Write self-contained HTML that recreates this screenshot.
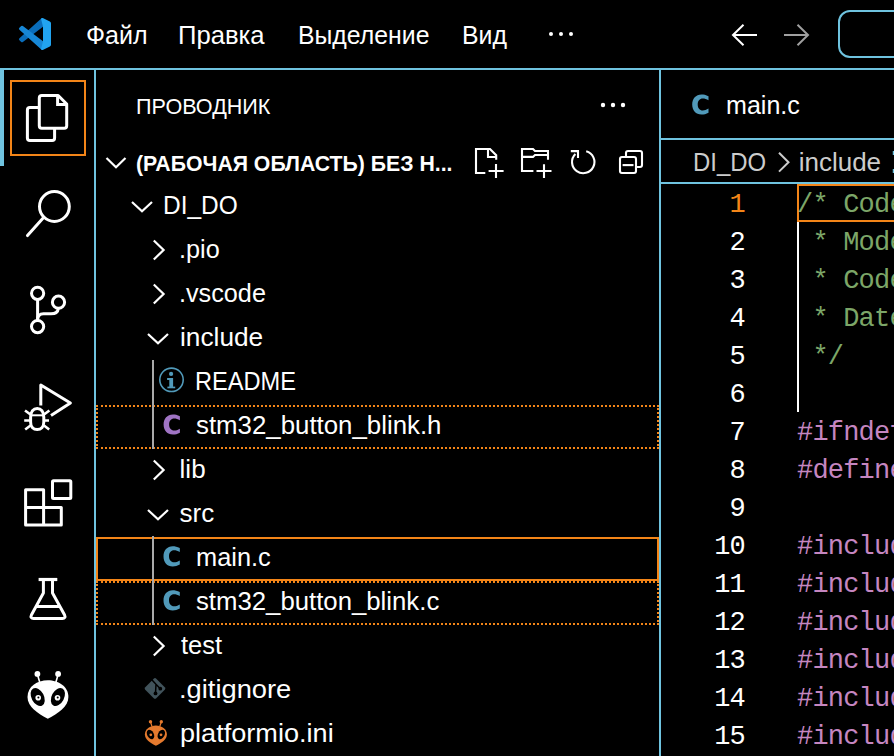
<!DOCTYPE html>
<html><head><meta charset="utf-8">
<style>
*{margin:0;padding:0;box-sizing:border-box}
html,body{width:894px;height:756px;overflow:hidden;background:#000}
body{position:relative;font-family:"Liberation Sans",sans-serif;color:#fff}
.a{position:absolute}
.t{position:absolute;white-space:nowrap;font-size:26px;line-height:30px;transform-origin:0 0}
.hl{position:absolute;background:#6FC3DF}
.mono{font-family:"Liberation Mono",monospace}
svg{position:absolute;overflow:visible}
</style></head><body>

<!-- borders -->
<div class="hl" style="left:0;top:68px;width:894px;height:2px"></div>
<div class="hl" style="left:94px;top:70px;width:2px;height:686px"></div>
<div class="hl" style="left:659px;top:70px;width:2px;height:686px"></div>
<div class="hl" style="left:661px;top:138px;width:233px;height:2px"></div>
<div class="hl" style="left:661px;top:182px;width:233px;height:2px"></div>
<!-- active indicator -->
<div class="a" style="left:0;top:70px;width:4px;height:96px;background:#6FC3DF"></div>
<div class="a" style="left:10px;top:80px;width:76px;height:76px;border:2px solid #F38518"></div>

<!-- title bar -->
<div class="t" id="m1" style="left:85.5px;top:20px;transform:scaleX(0.963)">Файл</div>
<div class="t" id="m2" style="left:178.2px;top:20px;transform:scaleX(0.986)">Правка</div>
<div class="t" id="m3" style="left:297.7px;top:20px;transform:scaleX(0.954)">Выделение</div>
<div class="t" id="m4" style="left:462.3px;top:20px;transform:scaleX(0.956)">Вид</div>
<div class="a" style="left:549px;top:32px;width:4px;height:4px;border-radius:50%;background:#fff"></div>
<div class="a" style="left:559px;top:32px;width:4px;height:4px;border-radius:50%;background:#fff"></div>
<div class="a" style="left:569px;top:32px;width:4px;height:4px;border-radius:50%;background:#fff"></div>
<div class="a" style="left:838px;top:10px;width:80px;height:48px;border:2px solid #6FC3DF;border-radius:12px"></div>

<!-- sidebar -->
<div class="t" id="h1" style="left:135.7px;top:92px;font-size:22px;transform:scaleX(0.98)">ПРОВОДНИК</div>
<div class="t" id="h2" style="left:136.2px;top:149px;font-size:22px;font-weight:bold;transform:scaleX(0.965)">(РАБОЧАЯ ОБЛАСТЬ) БЕЗ Н...</div>

<div class="t" id="r0" style="left:162.9px;top:190px;transform:scaleX(0.94)">DI_DO</div>
<div class="t" id="r1" style="left:178.6px;top:234px;transform:scaleX(0.97)">.pio</div>
<div class="t" id="r2" style="left:178.6px;top:278px;transform:scaleX(0.97)">.vscode</div>
<div class="t" id="r3" style="left:179.6px;top:322px;transform:scaleX(1.01)">include</div>
<div class="t" id="r4" style="left:194.8px;top:366px;transform:scaleX(0.908)">README</div>
<div class="t" id="r5" style="left:195.8px;top:410px;transform:scaleX(0.993)">stm32_button_blink.h</div>
<div class="t" id="r6" style="left:179.6px;top:454px;transform:scaleX(1.0)">lib</div>
<div class="t" id="r7" style="left:179.6px;top:498px;transform:scaleX(1.0)">src</div>
<div class="t" id="r8" style="left:195.8px;top:542px;transform:scaleX(0.976)">main.c</div>
<div class="t" id="r9" style="left:195.8px;top:586px;transform:scaleX(0.99)">stm32_button_blink.c</div>
<div class="t" id="r10" style="left:180.7px;top:630px;transform:scaleX(0.98)">test</div>
<div class="t" id="r11" style="left:178.7px;top:674px;transform:scaleX(1.05)">.gitignore</div>
<div class="t" id="r12" style="left:179.7px;top:718px;transform:scaleX(1.043)">platformio.ini</div>

<!-- editor -->
<div class="t" id="e1" style="left:725.7px;top:90px;transform:scaleX(0.964)">main.c</div>
<div class="t" id="b1" style="left:692.8px;top:147px;color:#ccc;transform:scaleX(0.92)">DI_DO</div>
<div class="t" id="b2" style="left:798.7px;top:147px;color:#ccc;transform:scaleX(1.0)">include</div>

<!-- list outlines -->
<div class="a" style="left:96px;top:405px;width:563px;height:44px;border:2px dotted #F38518"></div>
<div class="a" style="left:96px;top:581px;width:563px;height:44px;border:2px dotted #F38518"></div>
<div class="a" style="left:96px;top:537px;width:563px;height:44px;border:2px solid #F38518"></div>
<!-- indent guides -->
<div class="a" style="left:152px;top:360px;width:2px;height:89px;background:#a9a9a9"></div>
<div class="a" style="left:152px;top:536px;width:2px;height:89px;background:#a9a9a9"></div>

<!-- editor lines -->
<div class="a" style="left:797px;top:184px;width:120px;height:38px;border:2px solid #F38518"></div>
<div class="a" style="left:797px;top:222px;width:2px;height:190px;background:#fff"></div>
<div id="ln" class="a mono" style="left:662px;top:186px;width:83px;text-align:right;font-size:27px;line-height:38px;letter-spacing:-0.8px;color:#fff">
<div style="color:#F38518">1</div><div>2</div><div>3</div><div>4</div><div>5</div><div>6</div><div>7</div><div>8</div><div>9</div><div>10</div><div>11</div><div>12</div><div>13</div><div>14</div><div>15</div>
</div>
<div id="code" class="a mono" style="left:797px;top:186px;white-space:pre;font-size:27px;line-height:38px;letter-spacing:-0.8px"><div style="color:#7CA668">/* Code generated</div><div style="color:#7CA668"> * Model</div><div style="color:#7CA668"> * Code</div><div style="color:#7CA668"> * Date</div><div style="color:#7CA668"> */</div><div> </div><div style="color:#C586C0">#ifndef STM32</div><div style="color:#C586C0">#define STM32</div><div> </div><div style="color:#C586C0">#include &lt;stdio.h&gt;</div><div style="color:#C586C0">#include &lt;stm32&gt;</div><div style="color:#C586C0">#include &lt;stm32&gt;</div><div style="color:#C586C0">#include &lt;stm32&gt;</div><div style="color:#C586C0">#include &lt;stm32&gt;</div><div style="color:#C586C0">#include &lt;stm32&gt;</div></div>

<!-- icons -->
<svg style="left:0;top:0" width="894" height="756" viewBox="0 0 894 756" fill="none" stroke="#fff" stroke-width="3" stroke-linejoin="round">
<!-- vscode logo -->
<g transform="translate(19,18) scale(0.32)" stroke="none">
<path fill="#0A6DBA" d="M75.02 0.5V27.3L12.15 75A4.16 4.16 0 0 1 6.83 74.76L1.3 69.74A4.16 4.16 0 0 1 1.3 63.58L68.76 2.07A6.23 6.23 0 0 1 75.02 0.5Z"/>
<path fill="#1787D6" d="M6.83 25.24A4.16 4.16 0 0 1 12.15 25L75.02 72.7V99.5A6.23 6.23 0 0 1 68.76 97.93L1.3 36.42A4.16 4.16 0 0 1 1.3 30.26Z"/>
<path fill="#0F7AC8" d="M45.1 50L29.33 38.04 12.15 51.1 16.2 50 29.33 61.96Z" opacity="0"/>
<path fill="#22A4F0" d="M75.86 99.13a6.23 6.23 0 0 1-7.1-1.2L75.02 72.7V27.3L68.76 2.07a6.23 6.23 0 0 1 7.1-1.2l20.6 9.93A6.25 6.25 0 0 1 100 16.4v67.2a6.25 6.25 0 0 1-3.54 5.6z"/>
</g>
<!-- title arrows -->
<g stroke-width="2" stroke-linejoin="miter">
<path d="M757 35H733M743.5 24.8L733 35L743.5 45.2"/>
<path stroke="#a0a0a0" d="M784 35H808M797.5 24.8L808 35L797.5 45.2"/>
</g>
<!-- explorer -->
<path d="M41.8 95.5H58.2L66.7 104V125.7A2.5 2.5 0 0 1 64.2 128.2H41.8A2.5 2.5 0 0 1 39.3 125.7V98A2.5 2.5 0 0 1 41.8 95.5Z"/>
<path d="M57.6 95.5V104.6H66.7" stroke-linejoin="miter"/>
<path d="M39.3 107.6H29.9A2.5 2.5 0 0 0 27.4 110.1V138A2.5 2.5 0 0 0 29.9 140.5H52.1A2.5 2.5 0 0 0 54.6 138V128.2"/>
<!-- search -->
<circle cx="54.4" cy="206.5" r="14.9"/>
<path d="M43.6 217.6L27.5 235.6" stroke-linecap="round"/>
<!-- scm -->
<circle cx="37.6" cy="293.3" r="6.1"/>
<circle cx="58.5" cy="302.2" r="6.1"/>
<circle cx="37.6" cy="326.6" r="6.1"/>
<path d="M37.6 299.4V320.5"/>
<path d="M37.6 320C37.6 316 39.5 313.8 43.5 313.8H51C55.5 313.8 58 312 58.3 308.3"/>
<!-- debug -->
<path d="M40.8 405.5V385L70.4 403L51 415.5"/>
<path d="M30.6 417.5C30.6 411.5 33.5 408.5 37.2 408.5C41 408.5 43.8 411.5 43.8 417.5V422C43.8 427 41 429.5 37.2 429.5C33.5 429.5 30.6 427 30.6 422Z" stroke-width="3"/>
<path d="M30 415.3H44.5" stroke-width="2"/>
<path d="M25 410.5L30.5 414.5M49.4 410.5L44 414.5M24.2 420.5H30M44.5 420.5H49M25.2 429.5L30.5 425.5M49.2 429.5L44 425.5" stroke-width="2.6"/>
<!-- extensions -->
<path d="M25.6 489.7H43.6V507.5H61.3V525H25.6Z"/>
<path d="M25.6 507.5H43.6V525"/>
<rect x="52.5" y="480.7" width="18.3" height="17.7" rx="1"/>
<!-- testing -->
<path d="M38.6 579.5H57.3" stroke-width="3.2"/>
<path d="M43.4 580V593L31.4 615C30.5 617 31.2 618.4 33.6 618.4H62.4C64.8 618.4 65.5 617 64.6 615L52.5 593V580"/>
<path d="M37 606.5H59"/>
<!-- platformio -->
<g stroke="none">
<path fill="#fff" d="M47.8 680.3C58.5 680.3 68.4 686.5 68.4 697C68.4 706.5 58 713.5 47.8 718.7C37.6 713.5 27.5 706.5 27.5 697C27.5 686.5 37.1 680.3 47.8 680.3Z"/>
<ellipse cx="37.7" cy="697" rx="6.2" ry="9.6" transform="rotate(-28 37.7 697)" fill="#000"/>
<ellipse cx="57.9" cy="697" rx="6.2" ry="9.6" transform="rotate(28 57.9 697)" fill="#000"/>
<circle cx="38.2" cy="697.7" r="2.8" fill="#fff"/>
<circle cx="57.5" cy="697.7" r="2.8" fill="#fff"/>
<circle cx="38.4" cy="697.4" r="1" fill="#000"/>
<circle cx="57.7" cy="697.4" r="1" fill="#000"/>
<circle cx="37.4" cy="673.9" r="2.9" fill="#fff"/>
<circle cx="58.1" cy="673.9" r="2.9" fill="#fff"/>
</g>
<path d="M37.6 675L39.8 682.5M58 675L55.8 682.5" stroke-width="1.6"/>

<!-- explorer header actions -->
<g stroke-width="2.1" stroke-linejoin="miter">
<path d="M485.3 173H476V149H490L496.2 155.2V159.8"/>
<path d="M488 149.5V157H496.5"/>
<path d="M496 164V178M488.6 171H503.6"/>
<path d="M533.4 171H522V149H533L535 151H548V159.8"/>
<path d="M522 156.9H533L535 155H547.5"/>
<path d="M544 164.2V178M536.5 171H551.5"/>
<path d="M586.2 151.2A11.2 11.2 0 1 1 575.4 154"/>
<path d="M570.8 151.1H578V158"/>
<rect x="620" y="157" width="16" height="16" rx="2"/>
<path d="M626 156V153A2 2 0 0 1 628 151H640A2 2 0 0 1 642 153V165A2 2 0 0 1 640 167H637"/>
<path d="M622.6 165.1H633.5"/>
</g>
<path d="M779 152.8L788.5 162.2L779 171.6" stroke="#ccc" stroke-width="2" stroke-linejoin="miter"/>
<path d="M893.5 151V155M893.5 169V173" stroke="#6FC3DF" stroke-width="1.5"/>
<!-- tree chevrons -->
<g stroke-width="2.2" stroke-linejoin="miter">
<path d="M106.5 158L116 167.3L125.5 158"/>
<path d="M132 202L142 211.3L152 202"/>
<path d="M153.8 240.5L163.6 250L153.8 259.5"/>
<path d="M153.8 284.5L163.6 294L153.8 303.5"/>
<path d="M148 334L158 343.3L168 334"/>
<path d="M153.8 460.5L163.6 470L153.8 479.5"/>
<path d="M148 510L158 519.3L168 510"/>
<path d="M153.8 636.5L163.6 646L153.8 655.5"/>
</g>
<!-- ... explorer header -->
<g stroke="none" fill="#fff">
<circle cx="603" cy="105" r="2.2"/><circle cx="613" cy="105" r="2.2"/><circle cx="623" cy="105" r="2.2"/>
</g>
<!-- README info icon -->
<g stroke="#519aba">
<circle cx="171.5" cy="379.8" r="11.7" stroke-width="1.6"/>
<circle cx="171.1" cy="373.9" r="2.1" fill="#519aba" stroke="none"/>
<g stroke="none" fill="#519aba"><rect x="169.3" y="378" width="3.8" height="10"/><rect x="167.1" y="378" width="3" height="2"/><rect x="167.4" y="386.6" width="7.8" height="1.7"/></g>
</g>
<!-- git icon -->
<g transform="translate(155,688.4) rotate(45)" stroke="none">
<rect x="-7.8" y="-7.8" width="15.6" height="15.6" rx="1.8" fill="#41535b"/>
</g>
<path d="M151.8 679.8L156 684.3L160.3 688.7M156 684.3L155.5 693.4" stroke="#000" stroke-width="1.5"/>
<circle cx="155.5" cy="693.4" r="1.9" fill="#000" stroke="none"/>
<circle cx="160.3" cy="688.7" r="1.9" fill="#000" stroke="none"/>
<!-- platformio orange -->
<g stroke="none" fill="#E57A2E">
<path d="M155.9 725.5C161.7 725.5 166.9 729 166.9 734.5C166.9 739.5 161.5 743 155.9 745.7C150.3 743 144.9 739.5 144.9 734.5C144.9 729 150.1 725.5 155.9 725.5Z"/>
<circle cx="150.5" cy="721.8" r="1.7"/><circle cx="161.3" cy="721.8" r="1.7"/>
</g>
<path d="M150.7 722.5L152 726.5M161.1 722.5L159.8 726.5" stroke="#E57A2E" stroke-width="1.2"/>
<ellipse cx="150.5" cy="734.5" rx="3.3" ry="5" transform="rotate(-28 150.5 734.5)" fill="#000" stroke="none"/>
<ellipse cx="161.3" cy="734.5" rx="3.3" ry="5" transform="rotate(28 161.3 734.5)" fill="#000" stroke="none"/>
<circle cx="150.8" cy="734.8" r="1.4" fill="#E57A2E" stroke="none"/>
<circle cx="161" cy="734.8" r="1.4" fill="#E57A2E" stroke="none"/>
<!-- C file icons -->
<g stroke="none">
<path fill="#519aba" transform="translate(692.2,94.4)" d="M16.3 1.8C13.8 0.4 11.3 0 9.3 0C3.6 0 0 4.2 0 10.1C0 16 3.6 20.1 9.3 20.1C11.6 20.1 14 19.6 16.3 18.3V14.2C14.3 15.5 12.3 16 10.6 16C7.4 16 5.5 13.6 5.5 10C5.5 6.4 7.4 4 10.6 4C12.4 4 14.3 4.6 16.3 5.8Z"/>
<path fill="#a074c4" transform="translate(163.6,414.5)" d="M16.3 1.8C13.8 0.4 11.3 0 9.3 0C3.6 0 0 4.2 0 10.1C0 16 3.6 20.1 9.3 20.1C11.6 20.1 14 19.6 16.3 18.3V14.2C14.3 15.5 12.3 16 10.6 16C7.4 16 5.5 13.6 5.5 10C5.5 6.4 7.4 4 10.6 4C12.4 4 14.3 4.6 16.3 5.8Z"/>
<path fill="#519aba" transform="translate(163.5,546.3)" d="M16.3 1.8C13.8 0.4 11.3 0 9.3 0C3.6 0 0 4.2 0 10.1C0 16 3.6 20.1 9.3 20.1C11.6 20.1 14 19.6 16.3 18.3V14.2C14.3 15.5 12.3 16 10.6 16C7.4 16 5.5 13.6 5.5 10C5.5 6.4 7.4 4 10.6 4C12.4 4 14.3 4.6 16.3 5.8Z"/>
<path fill="#519aba" transform="translate(163.5,590.3)" d="M16.3 1.8C13.8 0.4 11.3 0 9.3 0C3.6 0 0 4.2 0 10.1C0 16 3.6 20.1 9.3 20.1C11.6 20.1 14 19.6 16.3 18.3V14.2C14.3 15.5 12.3 16 10.6 16C7.4 16 5.5 13.6 5.5 10C5.5 6.4 7.4 4 10.6 4C12.4 4 14.3 4.6 16.3 5.8Z"/>
</g>
</svg>
</body></html>
